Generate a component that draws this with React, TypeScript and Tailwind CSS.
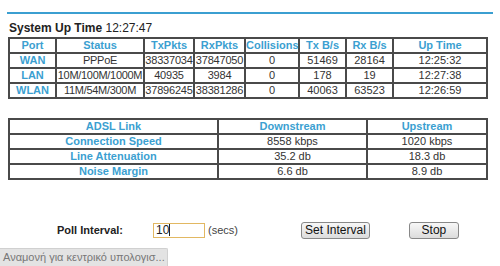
const ports = [
  { port: "WAN", status: "PPPoE", tx: "38337034", rx: "37847050", col: "0", txb: "51469", rxb: "28164", up: "12:25:32" },
  { port: "LAN", status: "10M/100M/1000M", tx: "40935", rx: "3984", col: "0", txb: "178", rxb: "19", up: "12:27:38" },
  { port: "WLAN", status: "11M/54M/300M", tx: "37896245", rx: "38381286", col: "0", txb: "40063", rxb: "63523", up: "12:26:59" },
];

const adsl = [
  { name: "Connection Speed", down: "8558 kbps", up: "1020 kbps" },
  { name: "Line Attenuation", down: "35.2 db", up: "18.3 db" },
  { name: "Noise Margin", down: "6.6 db", up: "8.9 db" },
];

const th = "border-2 border-[#4a4a4a] h-[13px] p-0 text-center font-bold text-[11px] text-[#3b9fd1] leading-[13px]";
const td = "border-2 border-[#4a4a4a] h-[13px] p-0 text-center text-[11px] text-[#333] leading-[13px] whitespace-nowrap overflow-hidden";

export default function App() {
  return (
    <div className="relative w-[500px] h-[266px] bg-white overflow-hidden font-['Liberation_Sans',Arial,sans-serif] text-[12px]">
      <div className="ml-[7px] mt-[12px] w-[486px] h-[2px] bg-[#3b9fd1]" />

      <div className="ml-[9px] mt-[7px] text-[12px] leading-[14px] text-[#222]">
        <span className="font-bold">System Up Time</span> 12:27:47
      </div>

      <table className="ml-[8px] mt-[2px] w-[478px] table-fixed border-collapse">
        <colgroup>
          <col className="w-[47px]" />
          <col className="w-[88px]" />
          <col className="w-[50px]" />
          <col className="w-[51px]" />
          <col className="w-[54px]" />
          <col className="w-[47px]" />
          <col className="w-[47px]" />
          <col className="w-[94px]" />
        </colgroup>
        <thead>
          <tr>
            <th className={th}>Port</th>
            <th className={th}>Status</th>
            <th className={th}>TxPkts</th>
            <th className={th}>RxPkts</th>
            <th className={th}>Collisions</th>
            <th className={th}>Tx B/s</th>
            <th className={th}>Rx B/s</th>
            <th className={th}>Up Time</th>
          </tr>
        </thead>
        <tbody>
          {ports.map((r) => (
            <tr key={r.port}>
              <td className={th}>{r.port}</td>
              <td className={`${td} tracking-[-0.3px]`}>{r.status}</td>
              <td className={`${td} tracking-[-0.2px]`}>{r.tx}</td>
              <td className={`${td} tracking-[-0.2px]`}>{r.rx}</td>
              <td className={td}>{r.col}</td>
              <td className={td}>{r.txb}</td>
              <td className={td}>{r.rxb}</td>
              <td className={td}>{r.up}</td>
            </tr>
          ))}
        </tbody>
      </table>

      <table className="ml-[8px] mt-[19px] w-[478px] table-fixed border-collapse">
        <colgroup>
          <col className="w-[209px]" />
          <col className="w-[149px]" />
          <col className="w-[120px]" />
        </colgroup>
        <thead>
          <tr>
            <th className={th}>ADSL Link</th>
            <th className={th}>Downstream</th>
            <th className={th}>Upstream</th>
          </tr>
        </thead>
        <tbody>
          {adsl.map((r) => (
            <tr key={r.name}>
              <td className={th}>{r.name}</td>
              <td className={td}>{r.down}</td>
              <td className={td}>{r.up}</td>
            </tr>
          ))}
        </tbody>
      </table>

      <div className="mt-[41px] flex items-center h-[18px] text-[11px]">
        <span className="ml-[57px] w-[96px] font-bold text-[#222]">Poll Interval:</span>
        <div className="w-[52px] h-[15px] border border-[#e2b862] bg-white flex items-center pl-[2px] text-[12px] text-[#222] leading-[13px]">
          10<span className="w-px h-[12px] bg-[#222]" />
        </div>
        <span className="ml-[3px] text-[#444]">(secs)</span>
        <button className="ml-[63px] w-[69px] h-[17px] rounded-[3px] border border-[#888] bg-gradient-to-b from-[#f7f7f7] to-[#dcdcdc] text-[#111] text-[12px] leading-[15px]">
          Set Interval
        </button>
        <button className="ml-[39px] w-[50px] h-[17px] rounded-[3px] border border-[#888] bg-gradient-to-b from-[#f7f7f7] to-[#dcdcdc] text-[#111] text-[12px] leading-[15px]">
          Stop
        </button>
      </div>

      <div className="absolute left-0 bottom-0 h-[18px] w-fit bg-[#e3e3e3] border-t border-r border-[#d0d0d0] rounded-tr-[2px] pl-[3px] pr-[2px] text-[11px] leading-[17px] text-[#777] whitespace-nowrap">
        Αναμονή για κεντρικό υπολογισ...
      </div>
    </div>
  );
}
